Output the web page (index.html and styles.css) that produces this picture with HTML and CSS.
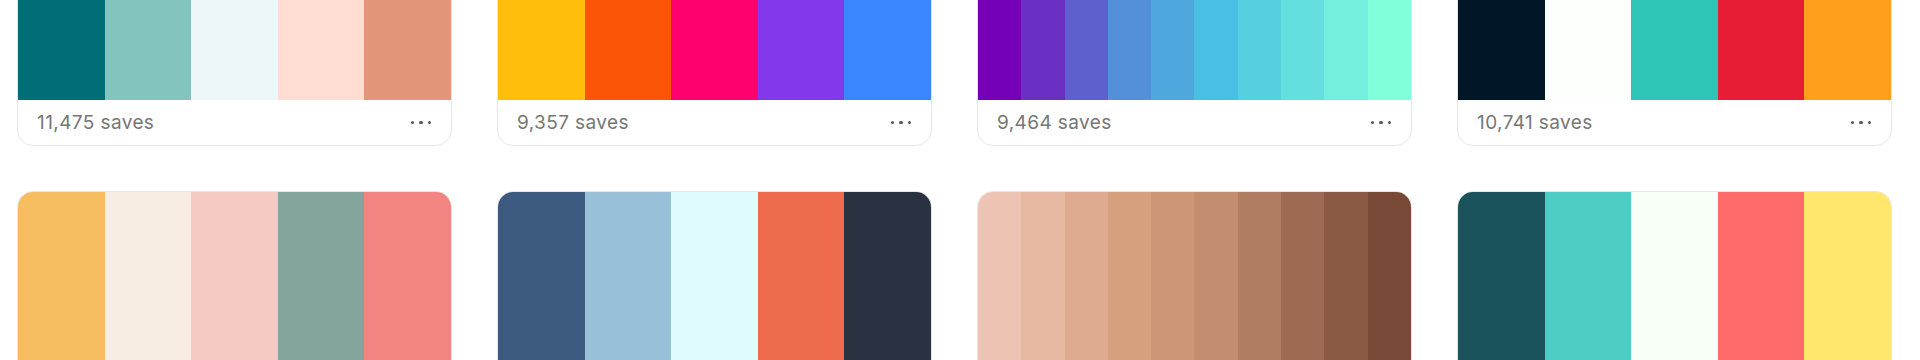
FILE: index.html
```html
<!DOCTYPE html>
<html lang="en">
<head>
    <meta charset="UTF-8">
    <meta name="viewport" content="width=device-width, initial-scale=1.0">
    <title>Palettes</title>
    <link rel="stylesheet" href="styles.css">
</head>
<body>
    <main class="palette-grid">
        <div class="palette-card">
            <div class="swatches">
                <span style="background:#006d77"></span>
                <span style="background:#83c5be"></span>
                <span style="background:#edf6f9"></span>
                <span style="background:#ffddd2"></span>
                <span style="background:#e29578"></span>
            </div>
            <div class="palette-footer">
                <p class="saves">11,475 saves</p>
                <button class="more-button" aria-label="More"><i></i><i></i><i></i></button>
            </div>
        </div>
        <div class="palette-card">
            <div class="swatches">
                <span style="background:#ffbe0b"></span>
                <span style="background:#fb5607"></span>
                <span style="background:#ff006e"></span>
                <span style="background:#8338ec"></span>
                <span style="background:#3a86ff"></span>
            </div>
            <div class="palette-footer">
                <p class="saves">9,357 saves</p>
                <button class="more-button" aria-label="More"><i></i><i></i><i></i></button>
            </div>
        </div>
        <div class="palette-card">
            <div class="swatches">
                <span style="background:#7400b8"></span>
                <span style="background:#6930c3"></span>
                <span style="background:#5e60ce"></span>
                <span style="background:#5390d9"></span>
                <span style="background:#4ea8de"></span>
                <span style="background:#48bfe3"></span>
                <span style="background:#56cfe1"></span>
                <span style="background:#64dfdf"></span>
                <span style="background:#72efdd"></span>
                <span style="background:#80ffdb"></span>
            </div>
            <div class="palette-footer">
                <p class="saves">9,464 saves</p>
                <button class="more-button" aria-label="More"><i></i><i></i><i></i></button>
            </div>
        </div>
        <div class="palette-card">
            <div class="swatches">
                <span style="background:#011627"></span>
                <span style="background:#fdfffc"></span>
                <span style="background:#2ec4b6"></span>
                <span style="background:#e71d36"></span>
                <span style="background:#ff9f1c"></span>
            </div>
            <div class="palette-footer">
                <p class="saves">10,741 saves</p>
                <button class="more-button" aria-label="More"><i></i><i></i><i></i></button>
            </div>
        </div>

        <div class="palette-card">
            <div class="swatches">
                <span style="background:#f6bd60"></span>
                <span style="background:#f7ede2"></span>
                <span style="background:#f5cac3"></span>
                <span style="background:#84a59d"></span>
                <span style="background:#f28482"></span>
            </div>
        </div>
        <div class="palette-card">
            <div class="swatches">
                <span style="background:#3d5a80"></span>
                <span style="background:#98c1d9"></span>
                <span style="background:#e0fbfc"></span>
                <span style="background:#ee6c4d"></span>
                <span style="background:#293241"></span>
            </div>
        </div>
        <div class="palette-card">
            <div class="swatches">
                <span style="background:#edc4b3"></span>
                <span style="background:#e6b8a2"></span>
                <span style="background:#deab90"></span>
                <span style="background:#d69f7e"></span>
                <span style="background:#cd9777"></span>
                <span style="background:#c38e70"></span>
                <span style="background:#b07d62"></span>
                <span style="background:#9d6b53"></span>
                <span style="background:#8a5a44"></span>
                <span style="background:#774936"></span>
            </div>
        </div>
        <div class="palette-card">
            <div class="swatches">
                <span style="background:#1a535c"></span>
                <span style="background:#4ecdc4"></span>
                <span style="background:#f7fff7"></span>
                <span style="background:#ff6b6b"></span>
                <span style="background:#ffe66d"></span>
            </div>
        </div>
    </main>
</body>
</html>
```

FILE: styles.css
```css
body {
    font-family: Inter, "Noto Sans", Arial, sans-serif;
    margin: 0;
    padding: 0;
    background: #fff;
    overflow: hidden;
}

/* page is scrolled, first row starts above the fold */
.palette-grid {
    display: grid;
    grid-template-columns: repeat(4, 435px);
    column-gap: 45px;
    row-gap: 45px;
    margin-top: -101px;
    padding-left: 17px;
}

.palette-card {
    border: 1px solid #e6e6e6;
    border-radius: 16px;
    overflow: hidden;
    background: #fff;
}

.swatches {
    display: flex;
    height: 200px;
}

.swatches span {
    flex: 1;
}

.palette-footer {
    display: flex;
    align-items: center;
    justify-content: space-between;
    height: 45px;
    padding: 0 20px 0 19px;
}

.saves {
    margin: 0;
    font-size: 19px;
    letter-spacing: 0.4px;
    color: #767676;
}

.more-button {
    display: flex;
    gap: 5px;
    padding: 0;
    border: none;
    background: none;
    cursor: pointer;
}

.more-button i {
    width: 3.5px;
    height: 3.5px;
    border-radius: 50%;
    background: #5a5a5a;
}
```
